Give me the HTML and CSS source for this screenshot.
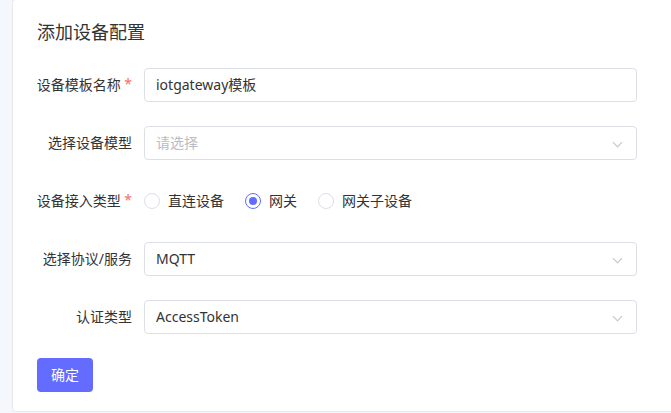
FILE: index.html
```html
<!DOCTYPE html>
<html lang="zh-CN">
<head>
    <meta charset="UTF-8">
    <meta name="viewport" content="width=device-width, initial-scale=1.0">
    <title>添加设备配置</title>
    <link rel="stylesheet" href="styles.css">
</head>
<body>
    <div class="card">
        <h2 class="title">添加设备配置</h2>
        <form class="form">
            <div class="row">
                <label class="label">设备模板名称&nbsp;<span class="req">*</span></label>
                <input class="input" type="text" value="iotgateway模板">
            </div>
            <div class="row">
                <label class="label">选择设备模型</label>
                <div class="select placeholder"><span>请选择</span><span class="arrow"></span></div>
            </div>
            <div class="row">
                <label class="label">设备接入类型&nbsp;<span class="req">*</span></label>
                <div class="radios">
                    <label class="radio"><span class="dot"></span>直连设备</label>
                    <label class="radio on"><span class="dot"></span>网关</label>
                    <label class="radio"><span class="dot"></span>网关子设备</label>
                </div>
            </div>
            <div class="row">
                <label class="label">选择协议/服务</label>
                <div class="select"><span>MQTT</span><span class="arrow"></span></div>
            </div>
            <div class="row">
                <label class="label">认证类型</label>
                <div class="select"><span>AccessToken</span><span class="arrow"></span></div>
            </div>
            <button type="button" class="btn">确定</button>
        </form>
    </div>
</body>
</html>
```

FILE: styles.css
```css
body { margin: 0; background-color: #f4f7fb; font-family: "Noto Sans", "Noto Sans CJK SC", sans-serif; color: #333; }
.card { margin: -1px 0 0 12px; background-color: white; border: 1px solid #e6e8ee; border-right: none; border-radius: 4px 0 0 4px; padding: 21px 24px 19px; }
.title { margin: 0 0 25px; font-size: 18px; font-weight: normal; line-height: 22px; color: #333; }
.form { width: 600px; }
.row { display: flex; align-items: center; height: 34px; margin-bottom: 24px; }
.label { width: 107px; flex-shrink: 0; display: flex; justify-content: flex-end; padding: 0 12px 3px 0; box-sizing: border-box; white-space: nowrap; font-size: 14px; color: #333; }
.req { color: #f56c6c; }
.input, .select { flex: 1; height: 34px; box-sizing: border-box; border: 1px solid #dcdfe6; border-radius: 4px; padding: 0 11px 2px; font-family: inherit; font-size: 14px; color: #333; background: white; outline: none; }
.select { display: flex; align-items: center; justify-content: space-between; }
.placeholder { color: #b9bcc2; }
.arrow { width: 6px; height: 6px; border-right: 1px solid #c0c4cc; border-bottom: 1px solid #c0c4cc; transform: rotate(45deg); margin: 0 4px 0 0; }
.radios { display: flex; gap: 21px; font-size: 14px; padding-bottom: 3px; }
.radio { display: flex; align-items: center; gap: 8px; color: #333; }
.dot { width: 14px; height: 14px; border: 1px solid #dcdfe6; border-radius: 50%; display: flex; align-items: center; justify-content: center; margin-top: 2px; }
.radio.on .dot { border-color: #646cff; }
.radio.on .dot::after { content: ""; width: 8px; height: 8px; border-radius: 50%; background-color: #646cff; }
.btn { height: 34px; padding: 0 14px 2px; border: none; border-radius: 4px; background-color: #646cff; color: white; font-family: inherit; font-size: 14px; }
```
